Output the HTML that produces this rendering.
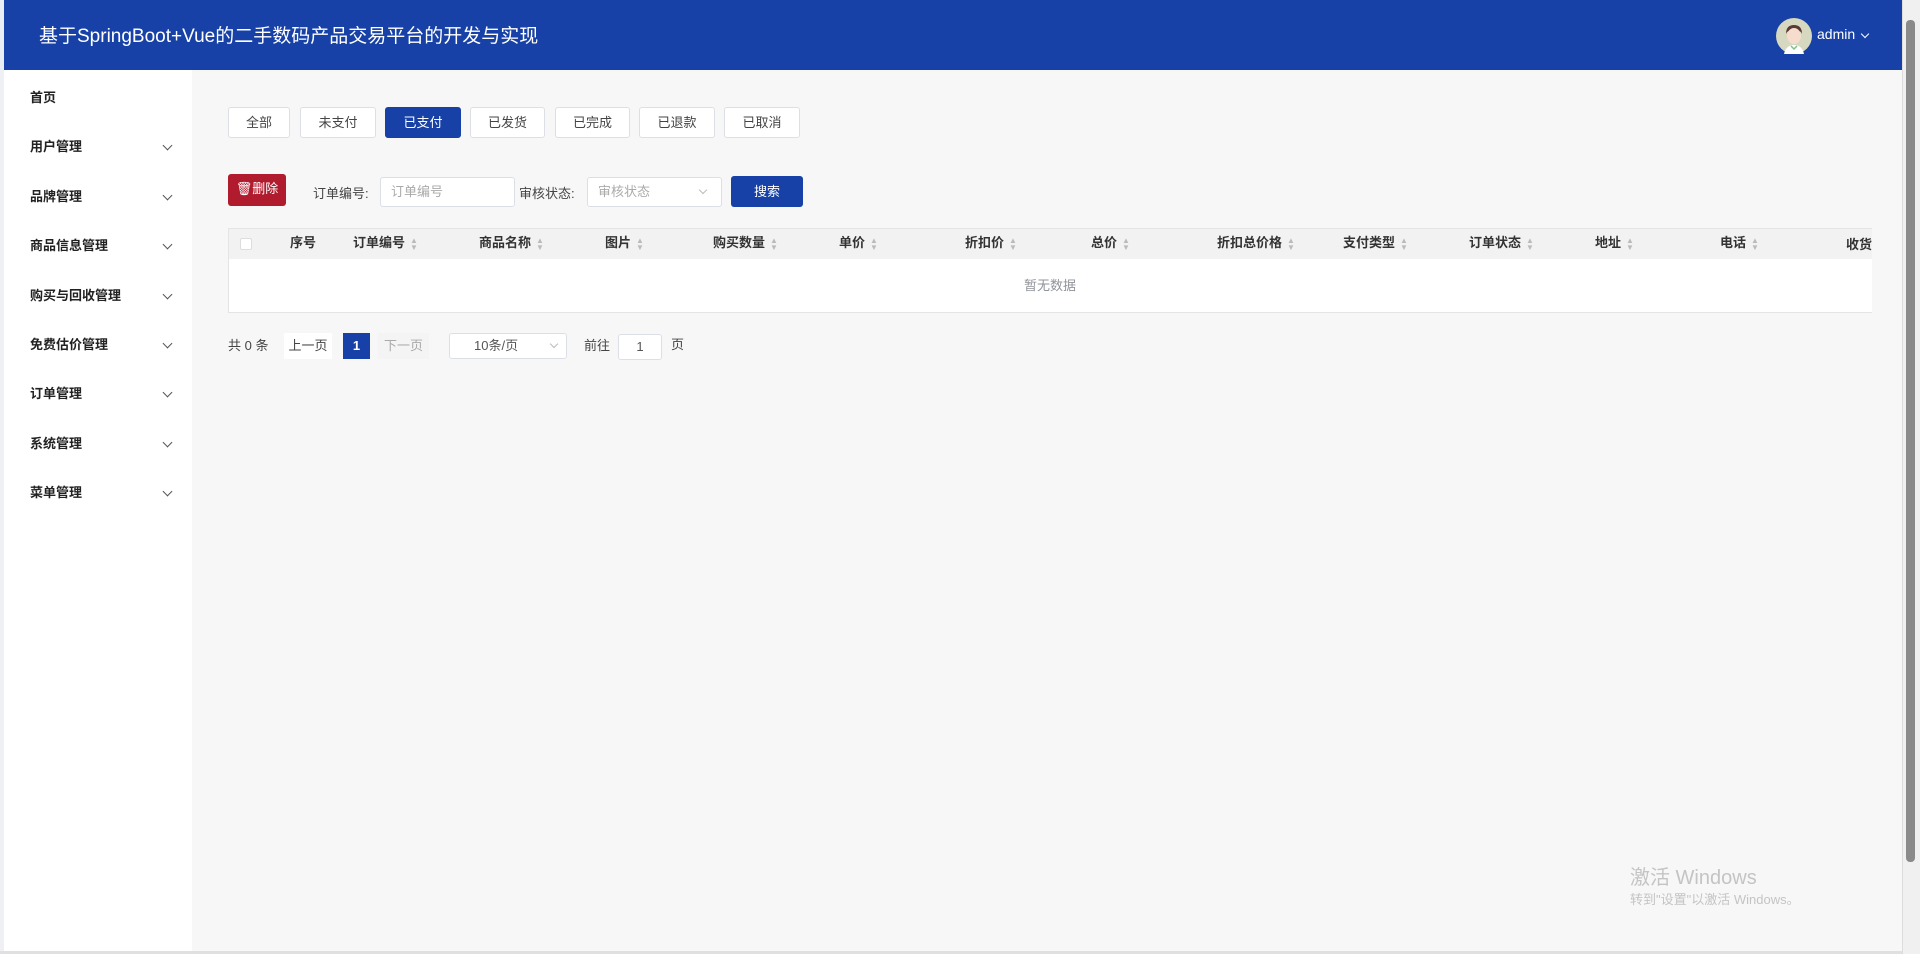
<!DOCTYPE html>
<html><head><meta charset="utf-8">
<style>
*{margin:0;padding:0;box-sizing:border-box}
body{width:1920px;height:954px;overflow:hidden;background:#f7f7f7;font-family:"Liberation Sans","Noto Sans CJK SC",sans-serif;position:relative;color:#303133}
.abs{position:absolute}
#hdr{left:0;top:0;width:1902px;height:70px;background:#1741a6;border-left:4px solid #e8ecf5}
#title{left:39px;top:21px;color:#fff;font-size:19px}
#side{left:0;top:70px;width:192px;height:884px;background:#fff;border-left:4px solid #eef0f3}
.mi{position:absolute;left:26px;font-size:13px;font-weight:bold;color:#222;line-height:16px}
.chev{position:absolute;left:160px;width:7px;height:7px;border-right:1px solid #555;border-bottom:1px solid #555;transform:rotate(45deg)}
.tab{position:absolute;top:107px;height:31px;border:1px solid #dcdfe6;background:#fff;border-radius:3px;font-size:13px;color:#444;text-align:center;line-height:29px}
.tab.on{background:#1741a6;border-color:#1741a6;color:#fff}
.lbl{position:absolute;font-size:13px;color:#444}
.inp{position:absolute;background:#fff;border:1px solid #dcdfe6;border-radius:3px;font-size:13px;color:#aaa;padding-left:10px}
.th{position:absolute;top:232px;font-size:13px;font-weight:bold;color:#333;white-space:nowrap}
.sort{display:inline-block;margin-left:5px;vertical-align:middle;color:#bbb;font-size:8px;line-height:7px;font-weight:normal}
#sb{left:1902px;top:0;width:18px;height:954px;background:#f0f0f0;border-left:1px solid #ddd}
</style></head><body>
<div id="hdr" class="abs"></div>
<div id="title" class="abs">基于SpringBoot+Vue的二手数码产品交易平台的开发与实现</div>
<svg class="abs" style="left:1776px;top:18px" width="36" height="36" viewBox="0 0 36 36">
<circle cx="18" cy="18" r="18" fill="#d6d8c0"/>
<path d="M10 16 Q10 7 18 7 Q26 7 26 16 L25 14 Q18 10 11 14Z" fill="#5a3a35"/>
<ellipse cx="18" cy="18" rx="7" ry="8" fill="#f6dccd"/>
<path d="M8 36 Q10 27 18 27 Q26 27 28 36Z" fill="#fff"/>
<path d="M15 28 L18 31 L21 28" stroke="#7cc08a" fill="none" stroke-width="1.5"/>
</svg>
<div class="abs" style="left:1817px;top:26px;color:#fff;font-size:14px">admin</div>
<div class="abs" style="left:1862px;top:31px;width:6px;height:6px;border-right:1px solid #fff;border-bottom:1px solid #fff;transform:rotate(45deg)"></div>
<div id="sb" class="abs"><div class="abs" style="left:3px;top:20px;width:9px;height:842px;background:#8a8a8a;border-radius:4px"></div></div>

<div id="side" class="abs">
<div class="mi" style="top:20px">首页</div>
<div class="mi" style="top:69px">用户管理</div><div class="chev" style="top:72px"></div>
<div class="mi" style="top:119px">品牌管理</div><div class="chev" style="top:122px"></div>
<div class="mi" style="top:168px">商品信息管理</div><div class="chev" style="top:171px"></div>
<div class="mi" style="top:218px">购买与回收管理</div><div class="chev" style="top:221px"></div>
<div class="mi" style="top:267px">免费估价管理</div><div class="chev" style="top:270px"></div>
<div class="mi" style="top:316px">订单管理</div><div class="chev" style="top:319px"></div>
<div class="mi" style="top:366px">系统管理</div><div class="chev" style="top:369px"></div>
<div class="mi" style="top:415px">菜单管理</div><div class="chev" style="top:418px"></div>
</div>

<div class="tab" style="left:228px;width:62px">全部</div>
<div class="tab" style="left:300px;width:76px">未支付</div>
<div class="tab on" style="left:385px;width:76px">已支付</div>
<div class="tab" style="left:470px;width:75px">已发货</div>
<div class="tab" style="left:555px;width:75px">已完成</div>
<div class="tab" style="left:639px;width:76px">已退款</div>
<div class="tab" style="left:724px;width:76px">已取消</div>

<div class="abs" style="left:228px;top:174px;width:58px;height:32px;background:#b01c2e;border-radius:3px;color:#fff;font-size:13px;line-height:30px;text-align:center">🗑删除</div>
<div class="lbl" style="left:313px;top:183px">订单编号:</div>
<div class="inp" style="left:380px;top:177px;width:135px;height:30px;line-height:28px">订单编号</div>
<div class="lbl" style="left:519px;top:183px">审核状态:</div>
<div class="inp" style="left:587px;top:177px;width:135px;height:30px;line-height:28px">审核状态</div>
<div class="abs" style="left:700px;top:187px;width:6px;height:6px;border-right:1px solid #bbb;border-bottom:1px solid #bbb;transform:rotate(45deg)"></div>
<div class="abs" style="left:731px;top:176px;width:72px;height:31px;background:#1741a6;border-radius:3px;color:#fff;font-size:13px;line-height:31px;text-align:center">搜索</div>

<div class="abs" style="left:228px;top:228px;width:1644px;height:85px;background:#fff;border:1px solid #e4e4e4;border-right:none"></div>
<div class="abs" style="left:229px;top:229px;width:1643px;height:30px;background:#f2f2f2"></div>
<div class="abs" style="left:240px;top:238px;width:12px;height:12px;border:1px solid #ddd;background:#fff;border-radius:2px"></div>
<div class="th" style="left:290px">序号</div>
<div class="th" style="left:353px">订单编号<span class="sort">▲<br>▼</span></div>
<div class="th" style="left:479px">商品名称<span class="sort">▲<br>▼</span></div>
<div class="th" style="left:605px">图片<span class="sort">▲<br>▼</span></div>
<div class="th" style="left:713px">购买数量<span class="sort">▲<br>▼</span></div>
<div class="th" style="left:839px">单价<span class="sort">▲<br>▼</span></div>
<div class="th" style="left:965px">折扣价<span class="sort">▲<br>▼</span></div>
<div class="th" style="left:1091px">总价<span class="sort">▲<br>▼</span></div>
<div class="th" style="left:1217px">折扣总价格<span class="sort">▲<br>▼</span></div>
<div class="th" style="left:1343px">支付类型<span class="sort">▲<br>▼</span></div>
<div class="th" style="left:1469px">订单状态<span class="sort">▲<br>▼</span></div>
<div class="th" style="left:1595px">地址<span class="sort">▲<br>▼</span></div>
<div class="th" style="left:1720px">电话<span class="sort">▲<br>▼</span></div>
<div class="abs" style="left:1846px;top:234px;width:26px;overflow:hidden;font-size:13px;font-weight:bold;white-space:nowrap;color:#333">收货</div>
<div class="abs" style="left:1024px;top:275px;font-size:13px;color:#909399">暂无数据</div>

<div class="lbl" style="left:228px;top:335px">共 0 条</div>
<div class="abs" style="left:284px;top:333px;width:48px;height:26px;background:#fff;font-size:13px;color:#444;text-align:center;line-height:26px">上一页</div>
<div class="abs" style="left:343px;top:333px;width:27px;height:26px;background:#1741a6;color:#fff;font-size:13px;font-weight:bold;text-align:center;line-height:26px">1</div>
<div class="abs" style="left:378px;top:333px;width:51px;height:26px;background:#f4f4f5;font-size:13px;color:#aaa;text-align:center;line-height:26px">下一页</div>
<div class="inp" style="left:449px;top:333px;width:118px;height:26px;line-height:24px;color:#555;padding-left:24px">10条/页</div>
<div class="abs" style="left:551px;top:341px;width:6px;height:6px;border-right:1px solid #bbb;border-bottom:1px solid #bbb;transform:rotate(45deg)"></div>
<div class="lbl" style="left:584px;top:335px">前往</div>
<div class="inp" style="left:618px;top:334px;width:44px;height:26px;line-height:24px;color:#555;padding:0;text-align:center">1</div>
<div class="lbl" style="left:671px;top:334px">页</div>

<div class="abs" style="left:1630px;top:861px;font-size:20px;color:#c4c4c4">激活 Windows</div>
<div class="abs" style="left:1630px;top:889px;font-size:13px;color:#c4c4c4">转到"设置"以激活 Windows。</div>
<div class="abs" style="left:0;top:951px;width:1902px;height:3px;background:#e0e0e0"></div>
</body></html>
